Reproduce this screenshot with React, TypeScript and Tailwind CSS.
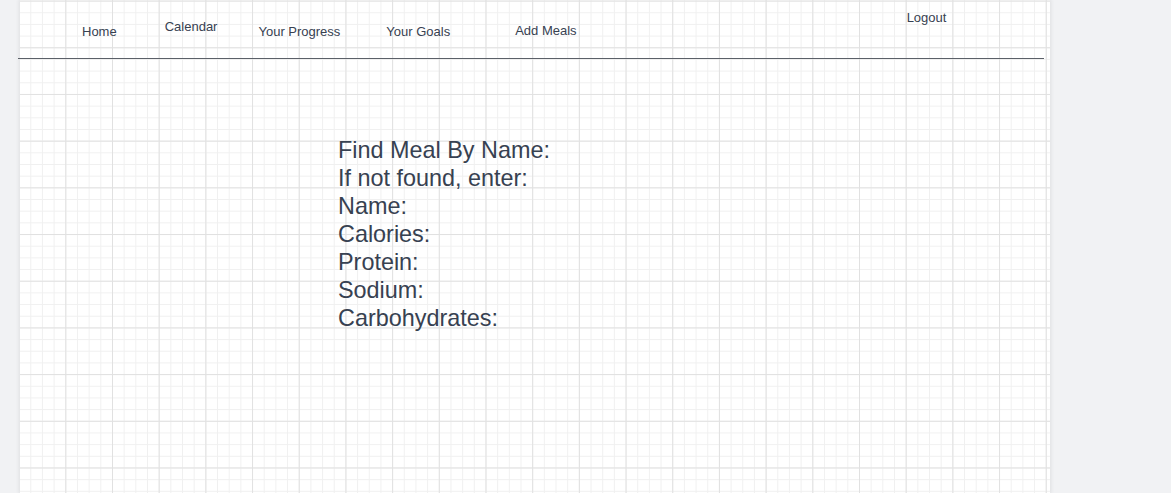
import React from "react";

const navItems = [
  { label: "Home", className: "ml-[62px] mt-[24px]" },
  { label: "Calendar", className: "ml-[48px] mt-[19px]" },
  { label: "Your Progress", className: "ml-[41px] mt-[24px]" },
  { label: "Your Goals", className: "ml-[46px] mt-[24px]" },
  { label: "Add Meals", className: "ml-[65px] mt-[23px]" },
];

const fields = [
  "Find Meal By Name:",
  "If not found, enter:",
  "Name:",
  "Calories:",
  "Protein:",
  "Sodium:",
  "Carbohydrates:",
];

const App = () => {
  return (
    <div className="min-h-screen bg-[#f1f2f4] font-['Liberation_Sans',Arial,sans-serif] text-[#374151]">
      <div className="ml-[20px] w-[1030px] min-h-screen bg-white shadow-[0_0_4px_1px_rgba(0,0,0,0.08)] bg-[linear-gradient(to_right,#e1e1e1_1px,transparent_1px),linear-gradient(to_bottom,#e1e1e1_1px,transparent_1px),linear-gradient(to_right,#f0f0f0_1px,transparent_1px),linear-gradient(to_bottom,#f0f0f0_1px,transparent_1px)] bg-[size:46.7px_46.7px,46.7px_46.7px,11.675px_11.675px,11.675px_11.675px] bg-[position:-1.4px_0.6px]">
        {/* Top navigation */}
        <div className="flex h-[58px] items-start text-[13px] leading-[15px]">
          {navItems.map((item) => (
            <div key={item.label} className={item.className}>
              {item.label}
            </div>
          ))}
          <div className="ml-[330px] mt-[10px]">Logout</div>
        </div>
        <div className="-ml-[2px] h-px w-[1026px] bg-[#5b6068]" />

        {/* Add meal form */}
        <div className="ml-[318px] pt-[77px] text-[23.4px] leading-[28.08px]">
          {fields.map((f) => (
            <div key={f}>{f}</div>
          ))}
        </div>
      </div>
    </div>
  );
};

export default App;
